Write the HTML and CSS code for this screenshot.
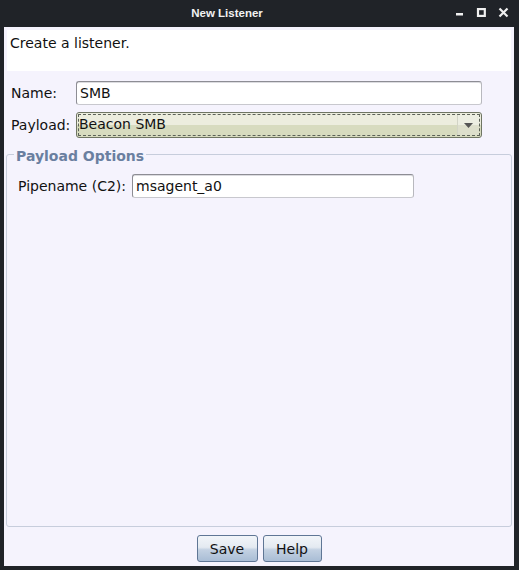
FILE: index.html
```html
<!DOCTYPE html>
<html>
<head>
<meta charset="utf-8">
<link rel="stylesheet" href="styles.css">
</head>
<body>
<div class="window">
  <div class="titlebar">
    <div class="title">New Listener</div>
    <svg class="controls" width="60" height="14" viewBox="0 0 60 14">
      <rect x="4" y="8" width="7" height="2.5" fill="#f0f0f0"/>
      <rect x="26" y="4.1" width="6.8" height="6.8" fill="none" stroke="#f0f0f0" stroke-width="2.2"/>
      <path d="M47.5 3.5 L55.5 11.5 M55.5 3.5 L47.5 11.5" stroke="#f0f0f0" stroke-width="2.2"/>
    </svg>
  </div>
  <div class="content">
    <div class="desc">Create a listener.</div>
    <div class="form">
      <div class="row">
        <label class="lbl">Name:</label>
        <div class="field">SMB</div>
      </div>
      <div class="row">
        <label class="lbl">Payload:</label>
        <div class="combo">
          <div class="combo-text">Beacon SMB</div>
          <div class="combo-btn"><svg width="9" height="5" viewBox="0 0 9 5"><path d="M0 0 H9 L4.5 5 Z" fill="#555"/></svg></div>
        </div>
      </div>
    </div>
    <fieldset class="options">
      <legend>Payload Options</legend>
      <div class="row opt-row">
        <label class="lbl2">Pipename (C2):</label>
        <div class="field pipe">msagent_a0</div>
      </div>
    </fieldset>
    <div class="buttons">
      <button class="btn save">Save</button>
      <button class="btn help">Help</button>
    </div>
  </div>
</div>
</body>
</html>
```

FILE: styles.css
```css
html, body {
  margin: 0;
  padding: 0;
  background: #202328;
}
body {
  font-family: "DejaVu Sans", sans-serif;
  font-size: 14px;
  color: #111;
}
.window {
  width: 519px;
  height: 570px;
  display: flex;
  flex-direction: column;
  box-sizing: border-box;
  padding: 0 5px 4px 4px;
}
.titlebar {
  height: 27px;
  flex: none;
  position: relative;
  display: flex;
  align-items: center;
  justify-content: center;
}
.title {
  color: #f2f2f2;
  font-family: "Liberation Sans", sans-serif;
  font-weight: bold;
  font-size: 11.5px;
  margin-right: 64px;
  margin-top: -1px;
}
.controls {
  position: absolute;
  left: 448px;
  top: 5px;
  display: block;
}
.content {
  flex: 1;
  background: #f5f3fd;
  display: flex;
  flex-direction: column;
  padding: 3px 2px 3px 2px;
  min-height: 0;
}
.desc {
  background: #ffffff;
  height: 41px;
  margin: 0 1px;
  padding: 5px 3px 0 3px;
  box-sizing: border-box;
  line-height: 17px;
}
.form {
  display: flex;
  flex-direction: column;
  gap: 7px;
  padding: 10px 0 0 5px;
}
.row {
  display: flex;
  align-items: center;
}
.lbl {
  width: 65px;
}
.field {
  width: 406px;
  height: 24px;
  box-sizing: border-box;
  background: #fff;
  border: 1px solid #8d8d94;
  border-bottom-color: #c8c8ce;
  border-right-color: #b8b8be;
  border-radius: 3px;
  box-shadow: inset 0 1px 0 #dcdce0;
  padding: 2px 3px 0 3px;
  line-height: 19px;
}
.combo {
  width: 406px;
  height: 26px;
  box-sizing: border-box;
  border: 1px solid #6f7563;
  border-radius: 3px;
  background: linear-gradient(#ecedde 0%, #ecedde 48%, #d7dbbf 52%, #d7dbbf 100%);
  display: flex;
  outline: 1px dashed #5b6158;
  outline-offset: -3px;
}
.combo-text {
  flex: 1;
  padding: 2px 0 0 2px;
  line-height: 19px;
}
.combo-btn {
  width: 21px;
  border-left: 1px solid #d2d4c6;
  display: flex;
  align-items: center;
  justify-content: center;
  background: linear-gradient(#eceee2 0%, #eceee2 48%, #dddfcc 52%, #dddfcc 100%);
  margin: 2px 2px 2px 0;
}
.options {
  flex: 1;
  margin: 6px 0 0 0;
  border: 1px solid #c7cddc;
  border-radius: 3px;
  padding: 0 0 0 11px;
  min-height: 0;
}
.options legend {
  color: #6a7fa0;
  font-weight: bold;
  font-size: 14px;
  padding: 4px 2px 0 2px;
  margin-left: -4px;
  line-height: 16px;
}
.opt-row {
  margin-top: 10px;
}
.lbl2 {
  width: 114px;
}
.pipe {
  width: 282px;
}
.buttons {
  height: 36px;
  flex: none;
  display: flex;
  justify-content: center;
  align-items: flex-start;
  gap: 5px;
  padding-top: 8px;
  box-sizing: border-box;
}
.btn {
  font-family: "DejaVu Sans", sans-serif;
  font-size: 14px;
  height: 27px;
  padding: 0;
  border: 1px solid #5f7695;
  border-radius: 3px;
  background: linear-gradient(#f2f5f9 0%, #e4eaf1 45%, #c3d1e2 55%, #a9bdd5 100%);
  color: #111;
}
.save { width: 61px; }
.help { width: 59px; }
```
